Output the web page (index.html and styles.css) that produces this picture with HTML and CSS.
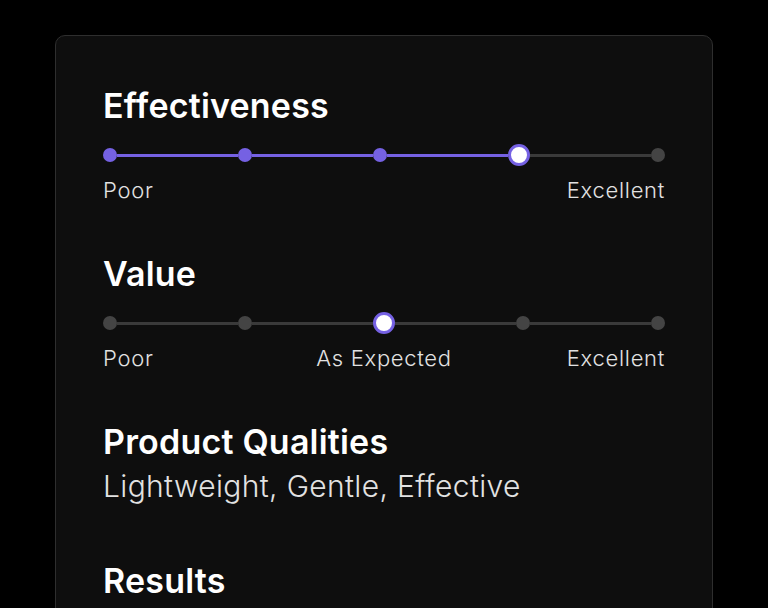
FILE: index.html
```html
<!DOCTYPE html>
<html lang="en">
<head>
  <meta charset="UTF-8" />
  <meta name="viewport" content="width=device-width, initial-scale=1.0"/>
  <title>Review</title>
  <link rel="stylesheet" href="styles.css">
</head>
<body>
  <div class="card">
    <div class="section">
      <h2 class="title">Effectiveness</h2>
      <div class="scale">
        <span class="dot on"></span>
        <span class="seg on"></span>
        <span class="dot on"></span>
        <span class="seg on"></span>
        <span class="dot on"></span>
        <span class="seg on"></span>
        <span class="thumb"></span>
        <span class="seg"></span>
        <span class="dot"></span>
      </div>
      <div class="labels">
        <span>Poor</span>
        <span></span>
        <span class="end">Excellent</span>
      </div>
    </div>

    <div class="section">
      <h2 class="title">Value</h2>
      <div class="scale">
        <span class="dot"></span>
        <span class="seg"></span>
        <span class="dot"></span>
        <span class="seg"></span>
        <span class="thumb"></span>
        <span class="seg"></span>
        <span class="dot"></span>
        <span class="seg"></span>
        <span class="dot"></span>
      </div>
      <div class="labels">
        <span>Poor</span>
        <span class="mid">As Expected</span>
        <span class="end">Excellent</span>
      </div>
    </div>

    <div class="section wide">
      <h2 class="title">Product Qualities</h2>
      <p class="text">Lightweight, Gentle, Effective</p>
    </div>

    <div class="section">
      <h2 class="title">Results</h2>
    </div>
  </div>
</body>
</html>
```

FILE: styles.css
```css
body {
  margin: 0;
  padding: 35px 0 0 0;
  background: #000;
  font-family: Inter, "Noto Sans", sans-serif;
  color: #fff;
}

.card {
  width: 658px;
  box-sizing: border-box;
  margin: 0 auto;
  padding: 52px 47px 200px 47px;
  background-color: #0e0e0e;
  border: 1px solid #2e2e2e;
  border-radius: 10px;
}

.section {
  margin-bottom: 52px;
}

.section.wide {
  margin-bottom: 59px;
}

.title {
  margin: 0;
  font-size: 34px;
  line-height: 36px;
  font-weight: 600;
  letter-spacing: 0.2px;
  color: #fff;
}

.scale {
  display: flex;
  align-items: center;
  height: 22px;
  margin-top: 20px;
}

.dot {
  width: 14px;
  height: 14px;
  border-radius: 50%;
  background-color: #444;
  flex: none;
}

.dot.on {
  background-color: #7561e3;
}

.seg {
  flex: 1;
  height: 3px;
  background-color: #3a3a3a;
}

.seg.on {
  background-color: #7561e3;
}

.thumb {
  width: 22px;
  height: 22px;
  box-sizing: border-box;
  border-radius: 50%;
  border: 3px solid #7561e3;
  background-color: #fff;
  flex: none;
}

.labels {
  display: grid;
  grid-template-columns: 1fr auto 1fr;
  margin-top: 10px;
  font-size: 22px;
  line-height: 28px;
  letter-spacing: 0.7px;
  font-weight: 300;
  color: #e2e2e2;
}

.labels .end {
  text-align: right;
}

.text {
  margin: 8px 0 0 0;
  font-size: 30px;
  line-height: 36px;
  letter-spacing: 0.35px;
  font-weight: 300;
  color: #e2e2e2;
}
```
